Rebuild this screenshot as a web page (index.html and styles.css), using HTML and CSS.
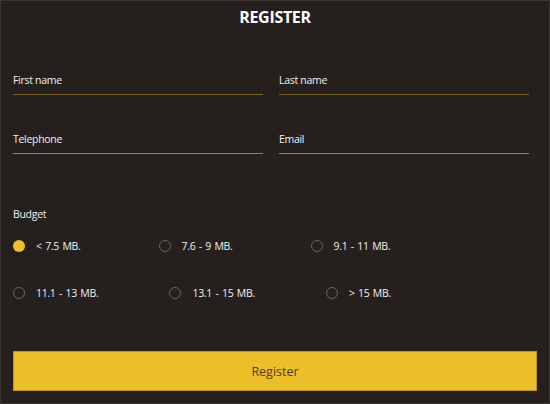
FILE: index.html
```html
<!DOCTYPE html>
<html lang="en">
<head>
<meta charset="utf-8">
<title>Register</title>
<link rel="stylesheet" href="styles.css">
</head>
<body>
<form class="page">
  <h1 class="title">REGISTER</h1>
  <div class="row row-first">
    <div class="field field-dim"><span class="label">First name</span></div>
    <div class="field field-dim"><span class="label">Last name</span></div>
  </div>
  <div class="row row-second">
    <div class="field field-tan"><span class="label">Telephone</span></div>
    <div class="field field-tan"><span class="label">Email</span></div>
  </div>
  <div class="budget-label">Budget</div>
  <div class="radios radios-one">
    <label class="radio"><span class="dot dot-on"></span><span class="rtext">&lt; 7.5 MB.</span></label>
    <label class="radio"><span class="dot"></span><span class="rtext">7.6 - 9 MB.</span></label>
    <label class="radio"><span class="dot"></span><span class="rtext">9.1 - 11 MB.</span></label>
  </div>
  <div class="radios radios-two">
    <label class="radio"><span class="dot"></span><span class="rtext">11.1 - 13 MB.</span></label>
    <label class="radio"><span class="dot"></span><span class="rtext">13.1 - 15 MB.</span></label>
    <label class="radio"><span class="dot"></span><span class="rtext">&gt; 15 MB.</span></label>
  </div>
  <button type="button" class="submit">Register</button>
</form>
</body>
</html>
```
FILE: styles.css
```css
html, body {
  margin: 0;
  padding: 0;
  background: #25201e;
}
.page {
  box-sizing: border-box;
  width: 550px;
  height: 404px;
  border: 1px solid #3a3532;
  padding: 0 12px;
  display: flex;
  flex-direction: column;
  font-family: "Open Sans", "Noto Sans", sans-serif;
  color: #f1f1f1;
}
.title {
  margin: 0;
  height: 33px;
  line-height: 33px;
  text-align: center;
  font-size: 16px;
  font-weight: 700;
  letter-spacing: -0.3px;
  color: #ffffff;
}
.row {
  display: grid;
  grid-template-columns: 250px 250px;
  column-gap: 16px;
}
.row-first { margin-top: 38px; }
.row-second { margin-top: 36px; }
.field {
  padding-bottom: 6px;
}
.field-dim { border-bottom: 1px solid #7a6322; }
.field-tan { border-bottom: 1px solid #a0844a; }
.label, .budget-label, .rtext {
  font-size: 10.5px;
  line-height: 16px;
  letter-spacing: -0.3px;
  display: block;
}
.rtext {
  word-spacing: 1px;
}
.budget-label {
  margin-top: 52px;
}
.radios {
  display: flex;
}
.radios-one { margin-top: 16px; column-gap: 78px; }
.radios-two { margin-top: 31px; column-gap: 71px; }
.radio {
  display: flex;
  align-items: center;
  gap: 11px;
}
.dot {
  box-sizing: border-box;
  width: 12px;
  height: 12px;
  border-radius: 50%;
  border: 1.5px solid #6a6562;
}
.dot-on {
  border: none;
  background: #efc12b;
}
.submit {
  margin-top: 50px;
  height: 40px;
  width: 100%;
  background: #ecbf29;
  border: 1px solid #b99628;
  color: #543a1c;
  font-family: "Open Sans", "Noto Sans", sans-serif;
  font-size: 12.5px;
  padding: 0;
}
```
